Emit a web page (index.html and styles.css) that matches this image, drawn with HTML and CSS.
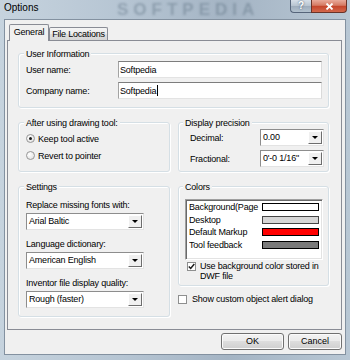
FILE: index.html
```html
<!DOCTYPE html>
<html lang="en">
<head>
  <meta charset="UTF-8">
  <meta name="viewport" content="width=device-width, initial-scale=1">
  <title>Options</title>
  <link rel="stylesheet" href="styles.css">
</head>
<body>

<div class="window">
  <div class="titlebar">
    <span class="title">Options</span>
    <span class="watermark">SOFTPEDIA</span>
    <div class="caption-buttons">
      <span class="cap-btn help">?</span>
      <span class="cap-btn close">
        <svg width="9" height="7" viewBox="0 0 9 7"><path d="M1.5 0.5 L7.5 6.5 M7.5 0.5 L1.5 6.5" stroke="#fff" stroke-width="1.8"/></svg>
      </span>
    </div>
  </div>

  <div class="client">
    <ul class="tabs">
      <li class="tab active">General</li>
      <li class="tab">File Locations</li>
    </ul>

    <div class="panel">
      <div class="group user-info">
        <span class="group-title">User Information</span>
        <div class="field-row">
          <span>User name:</span>
          <span class="textbox">Softpedia</span>
        </div>
        <div class="field-row">
          <span>Company name:</span>
          <span class="textbox">Softpedia<span class="caret"></span></span>
        </div>
      </div>

      <div class="group drawing">
        <span class="group-title">After using drawing tool:</span>
        <div class="radio-row"><span class="radio checked"></span><span>Keep tool active</span></div>
        <div class="radio-row"><span class="radio"></span><span>Revert to pointer</span></div>
      </div>

      <div class="group precision">
        <span class="group-title">Display precision</span>
        <div class="combo-row">
          <span>Decimal:</span>
          <div class="combo"><span class="combo-text">0.00</span><span class="combo-btn"></span></div>
        </div>
        <div class="combo-row">
          <span>Fractional:</span>
          <div class="combo"><span class="combo-text">0'-0 1/16"</span><span class="combo-btn"></span></div>
        </div>
      </div>

      <div class="group settings">
        <span class="group-title">Settings</span>
        <span class="setting-label">Replace missing fonts with:</span>
        <div class="combo"><span class="combo-text">Arial Baltic</span><span class="combo-btn"></span></div>
        <span class="setting-label">Language dictionary:</span>
        <div class="combo"><span class="combo-text">American English</span><span class="combo-btn"></span></div>
        <span class="setting-label">Inventor file display quality:</span>
        <div class="combo"><span class="combo-text">Rough (faster)</span><span class="combo-btn"></span></div>
      </div>

      <div class="side">
        <div class="group colors">
          <span class="group-title">Colors</span>
          <div class="listbox">
            <div class="color-item"><span>Background(Page</span><span class="swatch paper"></span></div>
            <div class="color-item"><span>Desktop</span><span class="swatch desktop"></span></div>
            <div class="color-item"><span>Default Markup</span><span class="swatch markup"></span></div>
            <div class="color-item"><span>Tool feedback</span><span class="swatch feedback"></span></div>
          </div>
          <div class="check-row inset">
            <span class="checkbox checked">
              <svg width="7" height="7" viewBox="0 0 7 7"><path d="M0.8 3.4 L2.7 5.4 L6.3 1" fill="none" stroke="#1c1c1c" stroke-width="1.5"/></svg>
            </span>
            <span class="check-label">Use background color stored in DWF file</span>
          </div>
        </div>
        <div class="check-row alone">
          <span class="checkbox"></span>
          <span>Show custom object alert dialog</span>
        </div>
      </div>
    </div>

    <div class="actions">
      <button class="button">OK</button>
      <button class="button cancel">Cancel</button>
    </div>
  </div>
</div>

</body>
</html>
```

FILE: styles.css
```css
*, *:after, *:before {
  box-sizing: border-box;
}
html, body {
  margin: 0;
}
body {
  color: #000;
  font-family: "Liberation Sans", Arial, sans-serif;
  font-size: 9px;
  letter-spacing: -.2px;
  line-height: 12px;
  height: 360px;
  overflow: hidden;
  width: 350px;
}

/* window frame */
.window {
  background: linear-gradient(90deg, #c6d3de 0%, #b6c5d3 35%, #a4b4c4 65%, #b8c7d4 100%);
  display: flex;
  flex-direction: column;
  height: 360px;
}
.titlebar {
  display: flex;
  height: 19px;
  padding: 0 3px 0 4px;
  position: relative;
}
.title {
  font-size: 10px;
  letter-spacing: 0;
  line-height: 16px;
}
.watermark {
  color: rgba(78, 96, 116, .35);
  filter: blur(1.2px);
  font: bold 17px/19px "Liberation Sans", Arial, sans-serif;
  left: 117px;
  letter-spacing: 5px;
  position: absolute;
  top: 0;
}
.caption-buttons {
  display: flex;
  height: 13px;
  margin-left: auto;
  position: relative;
}
.cap-btn {
  align-items: center;
  border: 1px solid #56657a;
  border-top: 0;
  display: flex;
  height: 13px;
  justify-content: center;
}
.help {
  background: linear-gradient(#d6dfe8, #b6c3cf 50%, #9dacbb 50%, #b3c2cf);
  border-radius: 0 0 0 4px;
  border-right: 0;
  color: #fff;
  font: bold 10px/10px "Liberation Sans", Arial, sans-serif;
  text-shadow: 0 0 2px #33475c;
  width: 21px;
}
.close {
  background: linear-gradient(#e9aa9a, #d57a63 45%, #c4442a 50%, #d3684c);
  border-color: #6a3328;
  border-radius: 0 0 4px 0;
  width: 36px;
}

/* client area */
.client {
  background: #f0f0f0;
  border: 1px solid #8391a0;
  display: flex;
  flex: 1;
  flex-direction: column;
  margin: 0 4px 5px 4px;
  position: relative;
}
.tabs {
  align-items: flex-end;
  display: flex;
  height: 20px;
  list-style: none;
  margin: 0;
  padding: 0 0 0 4px;
}
.tab {
  background: linear-gradient(#f5f5f5, #ebebeb 50%, #dedede 50%, #d6d6d6);
  border: 1px solid #898c95;
  border-bottom: 0;
  border-radius: 2px 2px 0 0;
  height: 13px;
  line-height: 12px;
  text-align: center;
  white-space: nowrap;
  width: 59px;
}
.tab.active {
  background: #f0f0f0;
  height: 17px;
  line-height: 15px;
  margin-bottom: -1px;
  position: relative;
  width: 40px;
}
.panel {
  border: 1px solid #898c95;
  column-gap: 8px;
  display: grid;
  grid-template-columns: 152px 151px;
  grid-template-rows: 55px 50px 131px;
  height: 290px;
  margin: 0 3px 0 2px;
  padding: 12px 12px 0 10px;
  row-gap: 14px;
}

/* group boxes */
.group {
  border: 1px solid #d5dfe5;
  border-radius: 3px;
  box-shadow: inset 1px 1px 0 #fff, 1px 1px 0 #fff;
  display: flex;
  flex-direction: column;
  padding: 0 6px 8px 7px;
}
.group-title {
  align-self: flex-start;
  background: #f0f0f0;
  margin: -6px 0 0 -2px;
  padding: 0 2px;
  white-space: nowrap;
}
.user-info {
  gap: 4px;
  grid-column: 1 / 3;
}
.field-row {
  align-items: center;
  display: grid;
  grid-template-columns: 92px 1fr;
}
.user-info .group-title + .field-row {
  margin-top: -3px;
}
.textbox {
  align-items: center;
  background: #fff;
  border: 1px solid;
  border-color: #7d7d7d #dadada #e3e3e3 #a3a3a3;
  display: flex;
  height: 17px;
  padding: 0 1px;
}
.caret {
  background: #000;
  height: 11px;
  margin-left: 1px;
  width: 1px;
}

.drawing {
  gap: 4px;
  padding-bottom: 9px;
}
.drawing .group-title + .radio-row {
  margin-top: -1px;
}
.radio-row {
  align-items: center;
  display: flex;
  gap: 3px;
  height: 13px;
}
.radio {
  align-items: center;
  background: radial-gradient(circle at 35% 35%, #fff, #dcdcdc);
  border: 1px solid #979797;
  border-radius: 50%;
  display: flex;
  height: 9px;
  justify-content: center;
  width: 9px;
}
.radio.checked:after {
  background: #1b1b1b;
  border-radius: 50%;
  content: "";
  height: 3px;
  width: 3px;
}

.precision {
  gap: 4px;
  padding: 0 4px 4px 6px;
}
.precision .group-title + .combo-row {
  margin-top: -4px;
}
.combo-row {
  align-items: center;
  display: grid;
  grid-template-columns: 70px 64px;
  padding-left: 5px;
}
.combo {
  background: #fff;
  border: 1px solid;
  border-color: #8d8d8d #e3e3e3 #e3e3e3 #8d8d8d;
  display: flex;
  height: 17px;
}
.combo-text {
  flex: 1;
  line-height: 15px;
  overflow: hidden;
  padding-left: 2px;
  white-space: nowrap;
}
.combo-btn {
  align-items: center;
  background: #f0f0f0;
  border: 1px solid;
  border-color: #fff #6d6d6d #6d6d6d #fff;
  display: flex;
  justify-content: center;
  margin: 1px 1px 1px 0;
  width: 14px;
}
.combo-btn:after {
  border: 3px solid transparent;
  border-bottom: 0;
  border-top-color: #000;
  content: "";
}

.settings .combo {
  width: 118px;
}
.setting-label {
  margin: 8px 0 2px;
  white-space: nowrap;
}
.settings .group-title + .setting-label {
  margin-top: 6px;
}

.side {
  display: flex;
  flex-direction: column;
}
.colors {
  height: 100px;
  padding: 0 5px 4px 6px;
}
.listbox {
  background: #fff;
  border: 1px solid;
  border-color: #a0a0a0 #fff #fff #a0a0a0;
  box-shadow: inset 1px 1px 0 #696969, inset -1px -1px 0 #e3e3e3;
  height: 61px;
  margin-top: 6px;
  padding: 1px 3px;
}
.color-item {
  align-items: center;
  display: grid;
  grid-template-columns: 1fr 57px;
  height: 12.5px;
}
.color-item span:first-child {
  overflow: hidden;
  white-space: nowrap;
}
.swatch {
  border: 1px solid #000;
  height: 8px;
}
.paper {
  background: #fff;
}
.desktop {
  background: #d6d6d6;
  border-color: #444;
}
.markup {
  background: #f00;
}
.feedback {
  background: #7a7a7a;
}

.check-row {
  align-items: flex-start;
  display: flex;
  gap: 4px;
}
.check-row.inset {
  line-height: 10px;
  margin: 1px 0 0 2px;
}
.check-row.inset .checkbox {
  margin-top: 1px;
}
.check-row.alone {
  align-items: center;
  gap: 5px;
  margin-top: 7px;
  white-space: nowrap;
}
.checkbox {
  align-items: center;
  background: #fff;
  border: 1px solid #8e8f8f;
  display: flex;
  flex: none;
  height: 9px;
  justify-content: center;
  width: 9px;
}

/* dialog buttons */
.actions {
  display: flex;
  gap: 4px;
  justify-content: flex-end;
  margin: 3px 3px 0 0;
}
.button {
  background: linear-gradient(#f3f3f3, #ebebeb 45%, #dddddd 50%, #cfcfcf);
  border: 1px solid #707070;
  border-radius: 3px;
  box-shadow: inset 0 0 0 1px #fbfbfb;
  color: #000;
  font: inherit;
  height: 17px;
  line-height: 13px;
  padding: 0;
  width: 63px;
}
.button.cancel {
  width: 54px;
}
```
